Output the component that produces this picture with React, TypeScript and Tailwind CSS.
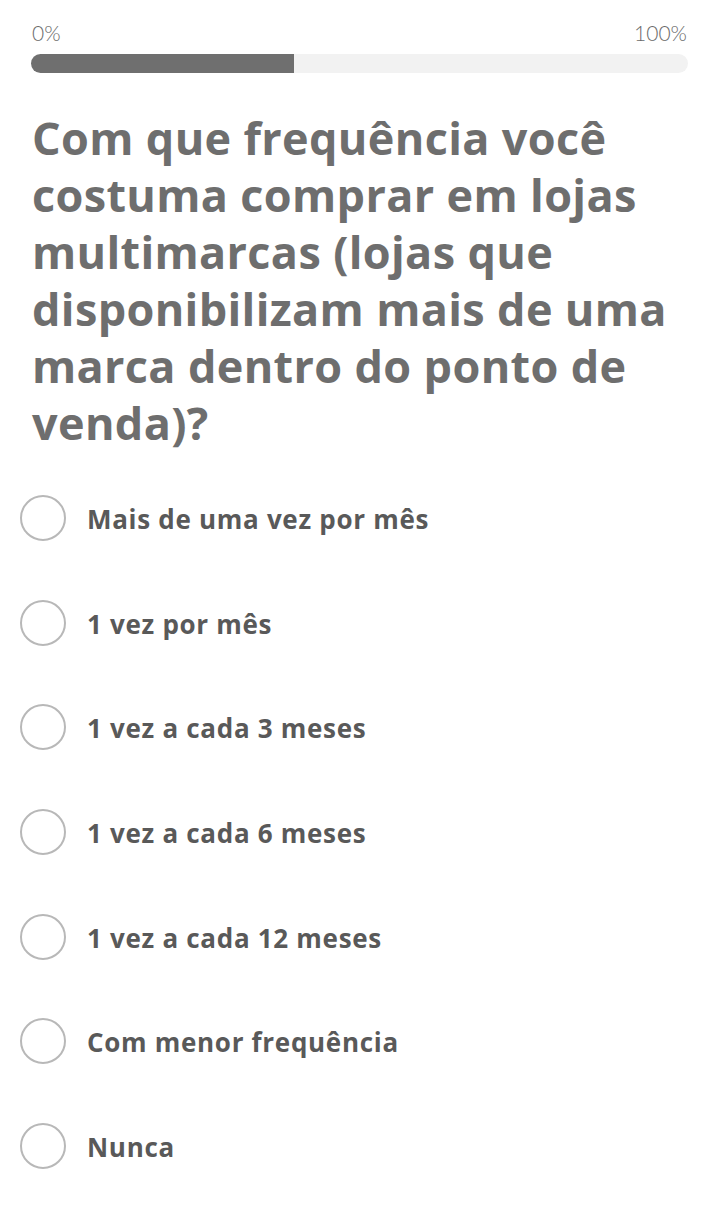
import React from "react";

const options = [
  "Mais de uma vez por mês",
  "1 vez por mês",
  "1 vez a cada 3 meses",
  "1 vez a cada 6 meses",
  "1 vez a cada 12 meses",
  "Com menor frequência",
  "Nunca",
];

export default function App() {
  return (
    <div className="min-h-screen bg-white font-['Open_Sans','Lato',sans-serif]">
      <div className="px-[22px] pt-[22px]">
        <div className="flex justify-between text-[21px] font-light text-[#6b6b6b] leading-[22px] px-[10px] font-['Lato',sans-serif]">
          <span>0%</span>
          <span>100%</span>
        </div>
        <div className="mx-[9px] mt-[10px] h-[19px] rounded-full bg-[#f2f2f2] overflow-hidden">
          <div className="h-full w-[40%] bg-[#6f6f6f]" />
        </div>
      </div>
      <h1 className="mt-[36px] px-[32px] text-[45px] font-bold leading-[57px] text-[#6e6e6e] tracking-[0.35px]">
        Com que frequência você costuma comprar em lojas multimarcas (lojas que disponibilizam mais de uma marca dentro do ponto de venda)?
      </h1>
      <div className="mt-[44px] flex flex-col">
        {options.map((o) => (
          <div key={o} className="flex h-[104.67px] items-start">
            <div className="ml-[20px] h-[46px] w-[46px] rounded-full border-2 border-[#b8b8b8]" />
            <span className="ml-[21px] mt-[7px] text-[26px] font-bold leading-[34px] text-[#595959] tracking-[0.7px]">{o}</span>
          </div>
        ))}
      </div>
    </div>
  );
}
